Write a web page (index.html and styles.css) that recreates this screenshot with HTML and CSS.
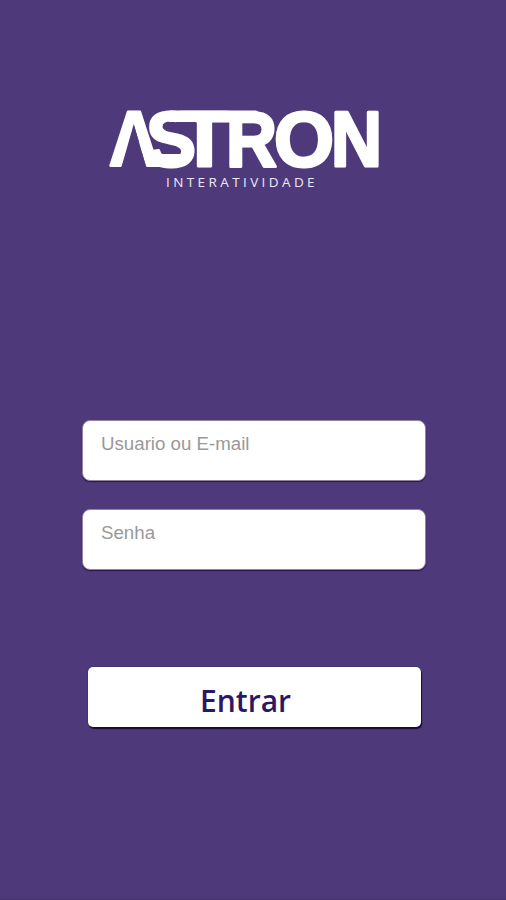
FILE: index.html
```html
<!DOCTYPE html>
<html lang="pt-BR">
<head>
<meta charset="utf-8">
<title>Astron Interatividade</title>
<link rel="stylesheet" href="styles.css">
</head>
<body>
<main class="screen">
  <header class="brand">
    <svg class="wordmark" viewBox="0 0 276 62" width="276" height="62">
      <text class="name" y="59.5"><tspan x="4" textLength="50" lengthAdjust="spacingAndGlyphs">A</tspan><tspan x="41" textLength="50" lengthAdjust="spacingAndGlyphs">S</tspan><tspan x="74" textLength="51" lengthAdjust="spacingAndGlyphs">T</tspan><tspan x="121" textLength="51" lengthAdjust="spacingAndGlyphs">R</tspan><tspan x="169" textLength="60" lengthAdjust="spacingAndGlyphs">O</tspan><tspan x="226" textLength="51" lengthAdjust="spacingAndGlyphs">N</tspan></text>
      <path class="notch" d="M28.8 18 L15.6 64 H42Z"/>
      <rect class="notch" x="71" y="14" width="20" height="10"/>
      <rect class="bar" x="62" y="4.5" width="92" height="11.5" rx="4"/>
      <rect class="bar" x="48" y="48" width="28" height="13"/>
    </svg>
    <p class="tagline">INTERATIVIDADE</p>
  </header>
  <form class="login">
    <input class="field" type="text" placeholder="Usuario ou E-mail">
    <input class="field" type="password" placeholder="Senha">
    <button class="submit" type="button">Entrar</button>
  </form>
</main>
</body>
</html>
```
FILE: styles.css
```css
* { box-sizing: border-box; }
body { margin: 0; background: #4e397b; }
.screen {
  height: 900px;
  padding-top: 106px;
  border-bottom: 1px solid #44336b;
  overflow: hidden;
}
.brand { width: 276px; margin-left: 105px; height: 314px; }
.wordmark { display: block; overflow: visible; }
.name {
  font: bold 78px "Liberation Sans", sans-serif;
  fill: #fff;
  stroke: #fff;
  stroke-width: 3px;
  stroke-linejoin: round;
}
.notch { fill: #4e397b; }
.bar { fill: #fff; }
.tagline {
  margin: 6px 0 0 61px;
  font: 13.5px/16px "Open Sans", sans-serif;
  letter-spacing: 3.4px;
  color: #eee9f5;
  white-space: nowrap;
}
.login { display: flex; flex-direction: column; width: 344px; margin-left: 82px; }
.field {
  width: 344px;
  height: 61px;
  margin: 0 0 28px;
  padding: 0 18px 14px;
  border: 1px solid #92849f;
  border-radius: 8px;
  background: #fff;
  box-shadow: 0 1px 1px #281450;
  font: 18.7px "Liberation Sans", sans-serif;
  outline: 0;
}
.field::placeholder { color: #999; opacity: 1; }
.submit {
  width: 333px;
  height: 60px;
  margin: 69px 0 0 6px;
  padding: 7px 18px 0 0;
  border: 0;
  border-radius: 5px;
  background: #fff;
  box-shadow: 1px 2px 1px #190838, 0 0 1px #190838;
  font: 600 30px "Open Sans", sans-serif;
  color: #2d1764;
}
```
